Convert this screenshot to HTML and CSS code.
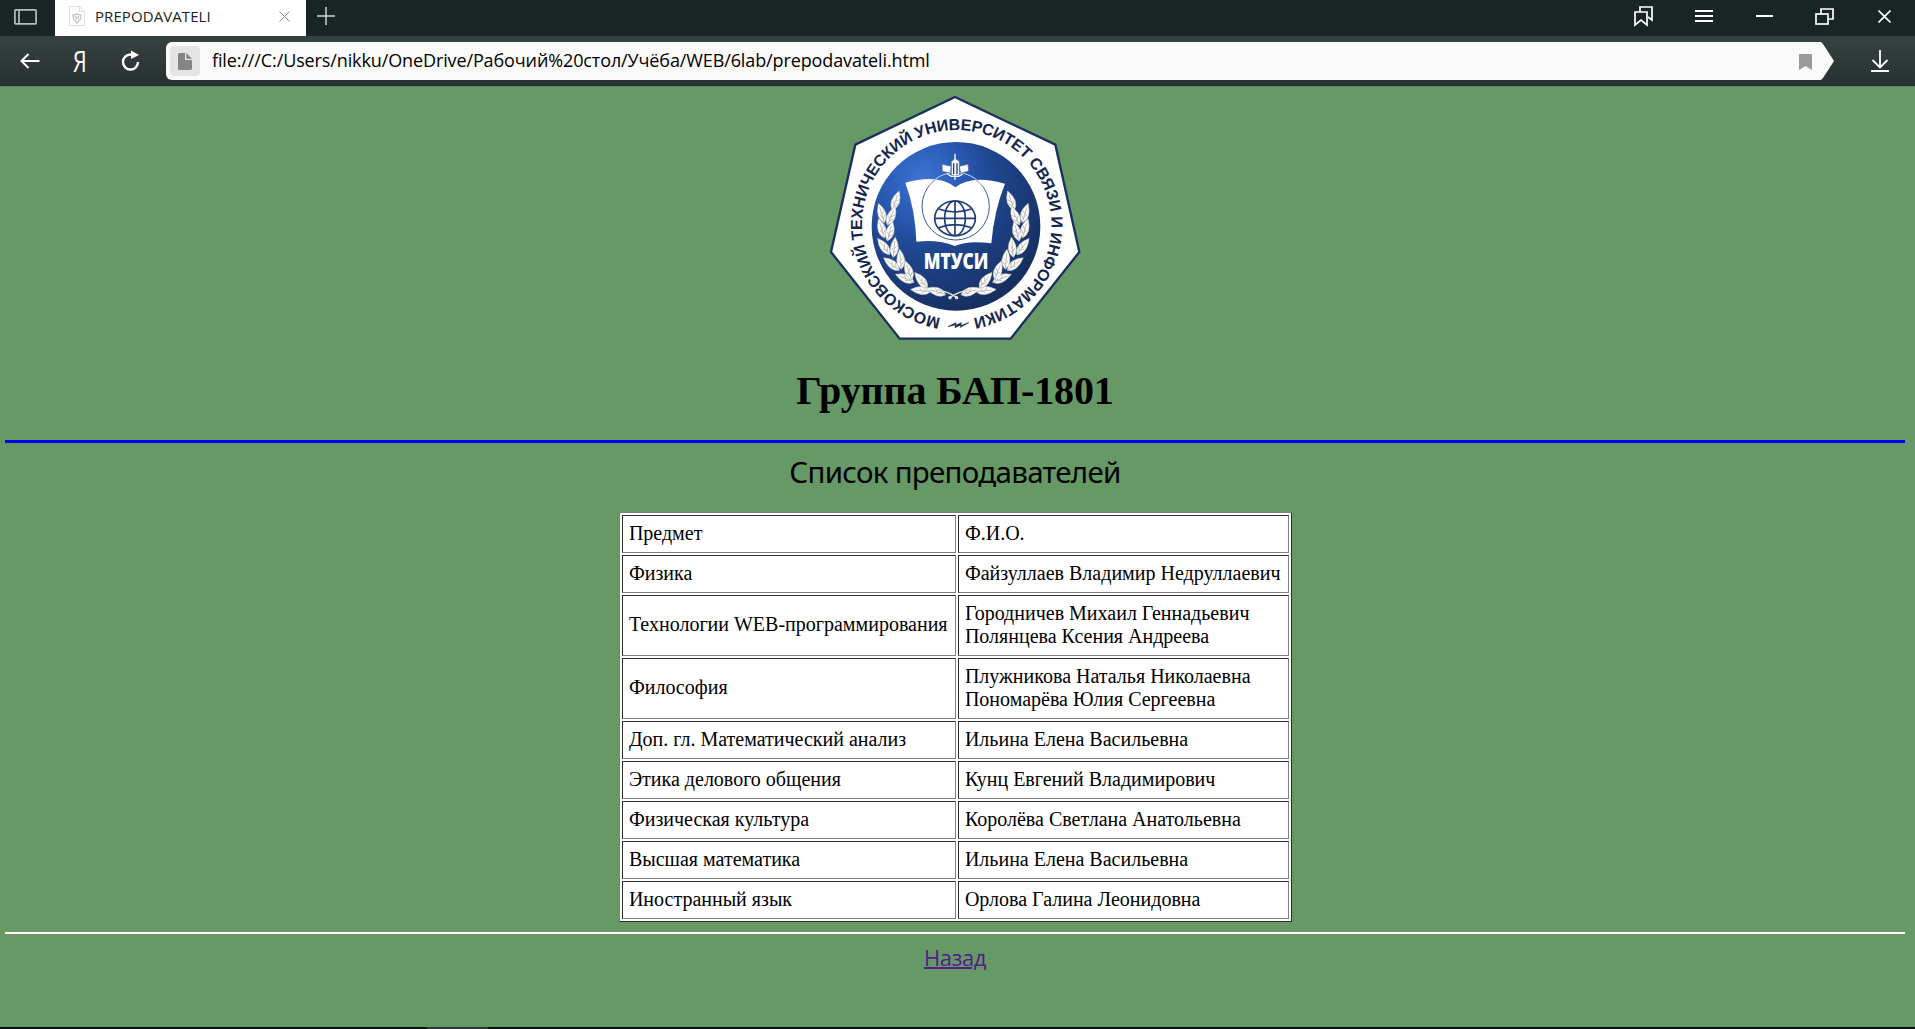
FILE: index.html
```html
<!DOCTYPE html>
<html lang="ru">
<head>
<meta charset="utf-8">
<title>PREPODAVATELI</title>
<link rel="stylesheet" href="styles.css">
</head>
<body>
<div class="window">
  <header class="tabbar">
    <svg class="panel-icon" width="23" height="16" viewBox="0 0 23 16" fill="none" stroke="#b6bdbd" stroke-width="1.7"><rect x=".9" y=".9" width="21.2" height="14" rx="1"/><path d="M5 1v14"/></svg>
    <div class="tab">
      <svg width="16" height="20" viewBox="0 0 16 20" fill="none" stroke="#dedede"><path d="M.5.5h10l5 5v14H.5zM10.500.5v5h5"/><path d="M4 9l4-1 4 1-.5 4-3.500 4-3.500-4zM6 10l2 3 2-3" stroke="#c8c8c8" stroke-width="1.500"/></svg>
      <span class="tab-title">PREPODAVATELI</span>
      <svg class="tab-close" width="11" height="11" viewBox="0 0 11 11" stroke="#888" stroke-width="1"><path d="M.5.5l10 10M10.500.5l-10 10"/></svg>
    </div>
    <svg class="new-tab" width="18" height="18" viewBox="0 0 18 18" stroke="#d0d4d4" stroke-width="1.500"><path d="M9 0v18M0 9h18"/></svg>
    <div class="controls">
      <svg width="20" height="21" viewBox="0 0 20 21" fill="none" stroke="#fff" stroke-width="1.700"><path d="M1 6h12v13l-6-5-6 5z"/><path d="M6 6V1h12v13l-4-3"/></svg>
      <svg width="18" height="12" viewBox="0 0 18 12" stroke="#fff" stroke-width="2"><path d="M0 1h18M0 6h18M0 11h18"/></svg>
      <svg width="17" height="2" viewBox="0 0 17 2"><path fill="#fff" d="M0 0h17v2H0z"/></svg>
      <svg width="19" height="17" viewBox="0 0 19 17" fill="none" stroke="#fff" stroke-width="1.700"><rect x="1" y="6" width="12" height="10"/><path d="M6 6V1h12v10h-5"/></svg>
      <svg width="13" height="13" viewBox="0 0 13 13" stroke="#fff" stroke-width="1.600"><path d="M.5.5l12 12M12.500.5l-12 12"/></svg>
    </div>
  </header>
  <nav class="toolbar">
    <svg class="back" width="20" height="16" viewBox="0 0 20 16" fill="none" stroke="#fff" stroke-width="2"><path d="M19.500 8H2M8.500 1L1.500 8l7 7"/></svg>
    <span class="ya">Я</span>
    <svg class="reload" width="20" height="22" viewBox="0 0 20 22"><path d="M11 4.500H9.500A7.500 7.500 0 1 0 17 12" fill="none" stroke="#fff" stroke-width="2.400"/><path d="M10 .5l8 4.500-8 4z" fill="#fff"/></svg>
    <div class="address">
      <span class="file"><svg width="14" height="17" viewBox="0 0 14 17" fill="#858585"><path d="M1 0h6v7h7v9l-1 1H1l-1-1V1z"/><path d="M8.300 0L14 5.700H8.300z"/></svg></span>
      <span class="url">file:///C:/Users/nikku/OneDrive/Рабочий%20стол/Учёба/WEB/6lab/prepodavateli.html</span>
      <svg class="bookmark" width="13" height="16" viewBox="0 0 13 16"><path fill="#999" d="M0 0h13v16l-6.500-4L0 16z"/></svg>
    </div>
    <svg class="download" width="18" height="22" viewBox="0 0 18 22" fill="none" stroke="#fff" stroke-width="1.800"><path d="M9 0v17M1.500 10L9 17.500l7.500-7.500M0 21h18"/></svg>
  </nav>
  <main class="page">
    <svg class="logo" width="270" height="260" viewBox="0 0 810 780">
      <defs>
        <radialGradient id="blue" cx=".3" cy=".22" r=".85"><stop offset="0" stop-color="#3f74d2"/><stop offset=".22" stop-color="#2c60bd"/><stop offset=".5" stop-color="#1f468f"/><stop offset="1" stop-color="#162d5c"/></radialGradient>
        <path id="ring" d="M362 696A284 284 0 1 1 458 696"/>
        <g id="leaf"><path d="M0 0Q-25-18-7-60Q22-25 0 0z" fill="#fff" stroke="#c9c9c6" stroke-width="2"/><path d="M0 0Q-2-20-6-48M-1-12l8-12M-3-26l7-10M-1-16l-9-10" stroke="#aaa79f" stroke-width="2" fill="none"/></g>
        <g id="branch">
          <use href="#leaf" transform="translate(217 372) rotate(26)"/><use href="#leaf" transform="translate(193 410) rotate(-10)"/>
          <use href="#leaf" transform="translate(202 417) rotate(30)"/><use href="#leaf" transform="translate(193 456) rotate(-10)"/>
          <use href="#leaf" transform="translate(202 465) rotate(22)"/><use href="#leaf" transform="translate(209 506) rotate(-30)"/>
          <use href="#leaf" transform="translate(220 514) rotate(12)"/><use href="#leaf" transform="translate(238 553) rotate(-45)"/>
          <use href="#leaf" transform="translate(244 550) rotate(2)"/><use href="#leaf" transform="translate(282 589) rotate(-60)"/>
          <use href="#leaf" transform="translate(275 582) rotate(-12)"/><use href="#leaf" transform="translate(332 617) rotate(-77)"/>
          <use href="#leaf" transform="translate(322 607) rotate(-32)"/><use href="#leaf" transform="translate(377 626) rotate(-65)"/>
          <path d="M350 612Q385 616 412 636" fill="none" stroke="#ddd" stroke-width="5"/>
        </g>
      </defs>
      <path d="M405 33L706 176L778 498L572 758H239L33 498L106 176z" fill="#fff" stroke="#1a305f" stroke-width="7"/>
      <circle cx="408" cy="421" r="253" fill="url(#blue)"/>
      <text class="ring-text"><textPath href="#ring" textLength="1686" lengthAdjust="spacing">МОСКОВСКИЙ ТЕХНИЧЕСКИЙ УНИВЕРСИТЕТ СВЯЗИ И ИНФОРМАТИКИ</textPath></text>
      <path d="M384 722l24-12-1 8 17-8-2 9 24-9-25 14 2-8-18 9 2-9z" fill="#14264d" stroke="#14264d" stroke-width="2"/>
      <path d="M256 290Q355 262 406 304Q455 265 555 293Q522 375 514 472Q445 462 404 480Q355 459 289 467Q286 370 256 290z" fill="#fff"/>
      <circle cx="407" cy="361" r="101" fill="none" stroke="#355998" stroke-width="3"/>
      <path d="M326 300A101 101 0 0 1 488 300" fill="none" stroke="#cdd9ef" stroke-width="3"/>
      <g fill="none" stroke="#1d3c78" stroke-width="5"><ellipse cx="405" cy="397" rx="61" ry="52"/><ellipse cx="405" cy="397" rx="31" ry="52"/><path d="M344 397h122M405 345v104M356 369q49 18 98 0M356 425q49-18 98 0"/></g>
      <g fill="#fff" stroke="#466cae" stroke-width="2"><path d="M366 235l28 6-3 20-24-5zM418 241l26-6 2 20-24 7zM394 226l12-8 12 8v42h-24z"/><path d="M382 264l12 7h22l12-7M405 203v78" fill="none" stroke="#fff" stroke-width="4"/><path d="M401 232v32M411 232v32" stroke="#1d3c78" stroke-width="4"/></g>
      <text class="logo-name" x="311" y="548" textLength="194" lengthAdjust="spacingAndGlyphs">МТУСИ</text>
      <use href="#branch"/><use href="#branch" transform="translate(800 0) scale(-1 1)"/>
      <circle cx="390" cy="635" r="5" fill="#eee"/><circle cx="410" cy="635" r="5" fill="#eee"/>
    </svg>
    <h1>Группа БАП-1801</h1>
    <hr class="rule-blue">
    <p class="subtitle">Список преподавателей</p>
    <table>
      <colgroup><col class="c1"><col class="c2"></colgroup>
      <tr><td>Предмет</td><td>Ф.И.О.</td></tr>
      <tr><td>Физика</td><td>Файзуллаев Владимир Недруллаевич</td></tr>
      <tr class="double"><td>Технологии WEB-программирования</td><td>Городничев Михаил Геннадьевич<br>Полянцева Ксения Андреева</td></tr>
      <tr class="double"><td>Философия</td><td>Плужникова Наталья Николаевна<br>Пономарёва Юлия Сергеевна</td></tr>
      <tr><td>Доп. гл. Математический анализ</td><td>Ильина Елена Васильевна</td></tr>
      <tr><td>Этика делового общения</td><td>Кунц Евгений Владимирович</td></tr>
      <tr><td>Физическая культура</td><td>Королёва Светлана Анатольевна</td></tr>
      <tr><td>Высшая математика</td><td>Ильина Елена Васильевна</td></tr>
      <tr><td>Иностранный язык</td><td>Орлова Галина Леонидовна</td></tr>
    </table>
    <hr class="rule-white">
    <a class="return" href="#">Назад</a>
  </main>
  <footer class="taskbar"><span></span></footer>
</div>
</body>
</html>
```
FILE: styles.css
```css
* { box-sizing: border-box; }
body { margin: 0; overflow: hidden; }
svg { display: block; flex: none; }
.window { display: flex; flex-direction: column; height: 1029px; background: #669966; }

.tabbar { height: 36px; flex: none; display: flex; background: #192424; }
.panel-icon { margin: 9px 18px 0 14px; }
.tab { width: 251px; height: 36px; background: #fff; display: flex; padding-left: 14px; }
.tab > svg:first-child { margin-top: 6px; }
.tab-title { font: 15px/33px "Open Sans", sans-serif; letter-spacing: 0.08px; color: #222; margin-left: 10px; width: 184px; white-space: nowrap; }
.tab-close { margin-top: 11px; }
.tab > .tab-close { margin-right: 15px; }
.new-tab { margin: 7px 0 0 11px; }
.controls { margin: 0 1px 0 auto; display: grid; grid-template-columns: repeat(5, 60px); justify-items: center; align-items: center; height: 32px; }

.toolbar { height: 50px; flex: none; display: flex; background: linear-gradient(#374140, #283131); }
.back { margin: 17px 0 0 20px; }
.ya { font: 29px/50px "Open Sans", sans-serif; color: #fff; width: 14px; margin-left: 33px; transform: scaleX(.75); transform-origin: left; }
.reload { margin: 14px 0 0 34px; }
.address { width: 1668px; height: 38px; margin: 6px 0 0 25px; padding-left: 4px; background: #fafafa; border-radius: 6px 0 0 6px; display: flex; align-items: center; clip-path: polygon(0 0, 1655px 0, 1657px 2px, 1668px 19px, 1657px 36px, 1655px 38px, 0 38px); }
.file { width: 30px; height: 30px; border-radius: 4px; background: #e4e4e4; display: grid; place-items: center; flex: none; }
.url { font: 18px/38px "Open Sans", sans-serif; letter-spacing: -0.12px; margin: -2px 0 0 12px; white-space: nowrap; color: #000; }
.bookmark { margin: 1px 22px 0 auto; }
.download { margin: 14px 0 0 37px; }

.page { flex: 1; padding: 0 10px 0 5px; display: flex; flex-direction: column; align-items: center; border-top: 1px solid #5d8a5d; }
.logo { margin-top: -1px; }
.ring-text { font: bold 48px "Liberation Sans", sans-serif; fill: #14264d; }
.logo-name { font: 800 68px "Open Sans", sans-serif; fill: #fff; }
h1 { margin: 22px 0 0; font: bold 40px/46px "Liberation Serif", serif; letter-spacing: -0.1px; }
hr { border: 0; width: 100%; margin: 0; flex: none; }
.rule-blue { height: 3px; background: #00f; margin-top: 26px; }
.subtitle { margin: 11px 0 0; font: 29.5px/36px "Noto Sans", sans-serif; white-space: nowrap; letter-spacing: -0.7px; }
table { margin-top: 22px; width: 673px; table-layout: fixed; border-collapse: separate; border-spacing: 2px; border: 1px solid; border-color: #808080 #2c2c2c #2c2c2c #808080; background: #fff; font: 20px/23px "Liberation Serif", serif; }
.c1 { width: 334px; }
.c2 { width: 331px; }
td { height: 38px; padding: 0 0 2px 6.4px; border: 1px solid; border-color: #2c2c2c #808080 #808080 #2c2c2c; white-space: nowrap; }
.double td { height: 61px; }
.rule-white { height: 2px; background: #fff; margin-top: 10px; }
.return { margin-top: 7px; font: 22px/32px "Open Sans", sans-serif; letter-spacing: -0.4px; color: #551a8b; text-decoration-thickness: 2px; }
.taskbar { height: 2px; flex: none; background: #0b0e18; }
.taskbar span { display: block; width: 61px; height: 2px; margin-left: 427px; background: #30363c; }
```
